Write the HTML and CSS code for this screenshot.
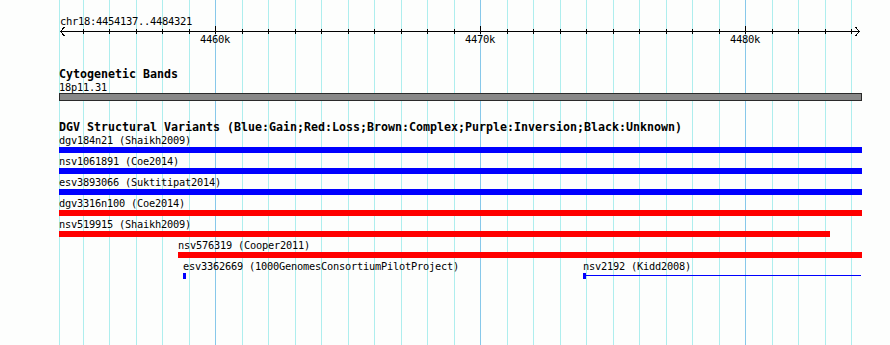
FILE: index.html
```html
<!DOCTYPE html>
<html lang="en">
<head>
    <meta charset="UTF-8">
    <title>chr18:4454137..4484321</title>
    <link rel="stylesheet" href="styles.css">
</head>
<body>

    <div class="panel">

        <!-- grid lines, one per kb -->
        <svg class="grid" width="890" height="345">
            <g class="minor">
                <rect x="59" y="0" width="1" height="345"/>
                <rect x="83" y="0" width="1" height="345"/>
                <rect x="109" y="0" width="1" height="345"/>
                <rect x="136" y="0" width="1" height="345"/>
                <rect x="162" y="0" width="1" height="345"/>
                <rect x="189" y="0" width="1" height="345"/>
                <rect x="242" y="0" width="1" height="345"/>
                <rect x="268" y="0" width="1" height="345"/>
                <rect x="295" y="0" width="1" height="345"/>
                <rect x="321" y="0" width="1" height="345"/>
                <rect x="348" y="0" width="1" height="345"/>
                <rect x="374" y="0" width="1" height="345"/>
                <rect x="401" y="0" width="1" height="345"/>
                <rect x="427" y="0" width="1" height="345"/>
                <rect x="454" y="0" width="1" height="345"/>
                <rect x="507" y="0" width="1" height="345"/>
                <rect x="533" y="0" width="1" height="345"/>
                <rect x="560" y="0" width="1" height="345"/>
                <rect x="586" y="0" width="1" height="345"/>
                <rect x="613" y="0" width="1" height="345"/>
                <rect x="639" y="0" width="1" height="345"/>
                <rect x="666" y="0" width="1" height="345"/>
                <rect x="692" y="0" width="1" height="345"/>
                <rect x="719" y="0" width="1" height="345"/>
                <rect x="772" y="0" width="1" height="345"/>
                <rect x="798" y="0" width="1" height="345"/>
                <rect x="825" y="0" width="1" height="345"/>
                <rect x="851" y="0" width="1" height="345"/>
            </g>
            <g class="major">
                <rect x="215" y="0" width="1" height="345"/>
                <rect x="480" y="0" width="1" height="345"/>
                <rect x="745" y="0" width="1" height="345"/>
            </g>
        </svg>

        <!-- Ruler -->
        <svg class="ruler" width="890" height="50">
            <text class="ruler-text" x="60" y="25">chr18:4454137..4484321</text>
            <rect x="60" y="31" width="800" height="1"/>
            <polyline class="arrow" points="64.5,27 60.5,31.5 64.5,36"/>
            <polyline class="arrow" points="855.5,27 859.5,31.5 855.5,36"/>
            <g>
                <rect x="83" y="29" width="1" height="5"/>
                <rect x="109" y="29" width="1" height="5"/>
                <rect x="136" y="29" width="1" height="5"/>
                <rect x="162" y="29" width="1" height="5"/>
                <rect x="189" y="29" width="1" height="5"/>
                <rect x="215" y="26" width="1" height="8"/>
                <rect x="242" y="29" width="1" height="5"/>
                <rect x="268" y="29" width="1" height="5"/>
                <rect x="295" y="29" width="1" height="5"/>
                <rect x="321" y="29" width="1" height="5"/>
                <rect x="348" y="29" width="1" height="5"/>
                <rect x="374" y="29" width="1" height="5"/>
                <rect x="401" y="29" width="1" height="5"/>
                <rect x="427" y="29" width="1" height="5"/>
                <rect x="454" y="29" width="1" height="5"/>
                <rect x="480" y="26" width="1" height="8"/>
                <rect x="507" y="29" width="1" height="5"/>
                <rect x="533" y="29" width="1" height="5"/>
                <rect x="560" y="29" width="1" height="5"/>
                <rect x="586" y="29" width="1" height="5"/>
                <rect x="613" y="29" width="1" height="5"/>
                <rect x="639" y="29" width="1" height="5"/>
                <rect x="666" y="29" width="1" height="5"/>
                <rect x="692" y="29" width="1" height="5"/>
                <rect x="719" y="29" width="1" height="5"/>
                <rect x="745" y="26" width="1" height="8"/>
                <rect x="772" y="29" width="1" height="5"/>
                <rect x="798" y="29" width="1" height="5"/>
                <rect x="825" y="29" width="1" height="5"/>
                <rect x="851" y="29" width="1" height="5"/>
            </g>
            <text class="ruler-text" x="200" y="43">4460k</text>
            <text class="ruler-text" x="465" y="43">4470k</text>
            <text class="ruler-text" x="730" y="43">4480k</text>
        </svg>

        <!-- Cytogenetic Bands -->
        <section class="track cyto">
            <div class="track-title">Cytogenetic Bands</div>
            <div class="feature-label">18p11.31</div>
            <div class="band"></div>
        </section>

        <!-- DGV -->
        <section class="track dgv">
            <div class="track-title">DGV Structural Variants (Blue:Gain;Red:Loss;Brown:Complex;Purple:Inversion;Black:Unknown)</div>

            <div class="row">
                <div class="feature" style="margin-left:59px;width:803px">
                    <div class="feature-label">dgv184n21 (Shaikh2009)</div>
                    <div class="bar gain"></div>
                </div>
            </div>
            <div class="row">
                <div class="feature" style="margin-left:59px;width:803px">
                    <div class="feature-label">nsv1061891 (Coe2014)</div>
                    <div class="bar gain"></div>
                </div>
            </div>
            <div class="row">
                <div class="feature" style="margin-left:59px;width:803px">
                    <div class="feature-label">esv3893066 (Suktitipat2014)</div>
                    <div class="bar gain"></div>
                </div>
            </div>
            <div class="row">
                <div class="feature" style="margin-left:59px;width:803px">
                    <div class="feature-label">dgv3316n100 (Coe2014)</div>
                    <div class="bar loss"></div>
                </div>
            </div>
            <div class="row">
                <div class="feature" style="margin-left:59px;width:771px">
                    <div class="feature-label">nsv519915 (Shaikh2009)</div>
                    <div class="bar loss"></div>
                </div>
            </div>
            <div class="row">
                <div class="feature" style="margin-left:178px;width:684px">
                    <div class="feature-label">nsv576319 (Cooper2011)</div>
                    <div class="bar loss"></div>
                </div>
            </div>
            <div class="row">
                <div class="feature" style="margin-left:183px;width:3px">
                    <div class="feature-label">esv3362669 (1000GenomesConsortiumPilotProject)</div>
                    <div class="bar gain stub"></div>
                </div>
                <div class="feature" style="margin-left:397px;width:278px">
                    <div class="feature-label">nsv2192 (Kidd2008)</div>
                    <div class="bar link"></div>
                </div>
            </div>
        </section>

    </div>

</body>
</html>
```

FILE: styles.css
```css
body {
    margin: 0;
    background-color: #fdfefd;
    font-family: "DejaVu Sans Mono", "Liberation Mono", monospace;
    color: #000;
}

.panel {
    position: relative;
    width: 890px;
    height: 345px;
    overflow: hidden;
}

.grid {
    position: absolute;
    top: 0;
    left: 0;
    shape-rendering: crispEdges;
}

.grid .minor {
    fill: #aeeeee;
}

.grid .major {
    fill: #87c8ea;
}

.ruler {
    position: relative;
    display: block;
    shape-rendering: crispEdges;
}

.ruler-text {
    font-family: "DejaVu Sans Mono", "Liberation Mono", monospace;
    font-size: 10.5px;
    letter-spacing: -0.32px;
    fill: #000;
}

.arrow {
    fill: none;
    stroke: #000;
    stroke-width: 1;
}

.track {
    position: relative;
}

.cyto {
    margin-top: 18px;
}

.dgv {
    margin-top: 20px;
}

.track-title {
    padding-left: 59px;
    font-size: 11.63px;
    font-weight: bold;
    line-height: 13px;
    white-space: nowrap;
}

.feature-label {
    font-size: 10.3px;
    letter-spacing: -0.2px;
    line-height: 12px;
    white-space: nowrap;
}

.cyto .feature-label {
    padding-left: 59px;
}

.band {
    margin-left: 59px;
    width: 801px;
    height: 6px;
    background: #888888;
    border: 1px solid #2a2a2a;
    box-sizing: content-box;
}

.row {
    display: flex;
    height: 21px;
}

.feature {
    flex: none;
}

.bar {
    height: 6px;
    margin-top: 1px;
}

.gain {
    background: #0000ff;
}

.loss {
    background: #ff0000;
}

.link {
    background:
        linear-gradient(#0000ff, #0000ff) 0 0 / 3px 6px no-repeat,
        linear-gradient(#0000ff, #0000ff) 0 2px / 100% 1px no-repeat;
}
```
